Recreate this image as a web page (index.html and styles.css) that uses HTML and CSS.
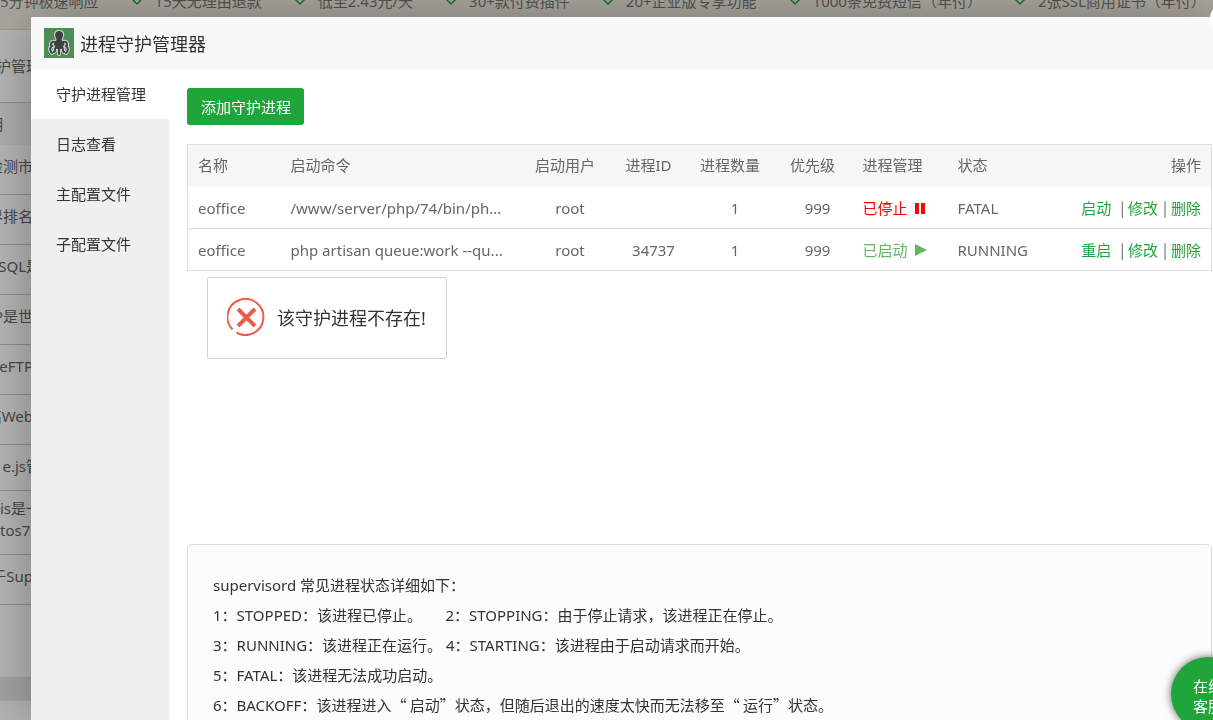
FILE: index.html
```html
<!DOCTYPE html>
<html lang="zh-CN">

<head>
    <meta charset="UTF-8">
    <meta name="viewport" content="width=device-width, initial-scale=1.0">
    <title>进程守护管理器</title>
    <link rel="stylesheet" href="styles.css">
</head>

<body>
    <div class="page">
        <div class="promo">
            <span>5分钟极速响应</span>
            <span><svg viewBox="0 0 12 10"><path d="M1 3l5 5 5-5" /></svg>15天无理由退款</span>
            <span><svg viewBox="0 0 12 10"><path d="M1 3l5 5 5-5" /></svg>低至2.43元/天</span>
            <span><svg viewBox="0 0 12 10"><path d="M1 3l5 5 5-5" /></svg>30+款付费插件</span>
            <span><svg viewBox="0 0 12 10"><path d="M1 3l5 5 5-5" /></svg>20+企业版专享功能</span>
            <span><svg viewBox="0 0 12 10"><path d="M1 3l5 5 5-5" /></svg>1000条免费短信（年付）</span>
            <span><svg viewBox="0 0 12 10"><path d="M1 3l5 5 5-5" /></svg>2张SSL商用证书（年付）</span>
        </div>
        <div class="soft_list">
            <div class="soft_top wide">护管理</div>
            <div class="soft_head">明</div>
            <div class="soft">检测市</div>
            <div class="soft">界排名</div>
            <div class="soft wide">SQL是</div>
            <div class="soft">P是世</div>
            <div class="soft">eFTP</div>
            <div class="soft">高Web</div>
            <div class="soft wide short">e.js管</div>
            <div class="soft start">is是一<br>tos7</div>
            <div class="soft">于Sup</div>
        </div>
        <div class="soft_footer"></div>
    </div>
    <div class="shade"></div>

    <div class="dialog" role="dialog" aria-labelledby="dialog_title">
        <div class="dialog_title">
            <svg class="logo" viewBox="0 0 30 30">
                <rect width="30" height="30" fill="#4d8e57" />
                <g fill="#d0d4d0" stroke="#d0d4d0" stroke-width="4" stroke-linejoin="round" stroke-linecap="round">
                    <path d="M15 3c-2.500 0-4 1.700-4 4 0 2 1.600 3 1.600 5l-3 4 3 5h5l3-5-3-4c0-2 1.600-3 1.600-5 0-2.300-1.600-4-4.200-4z" stroke-width="2" />
                    <path d="M11 14c-4-1-5 2-3 4-3 2-2 5 0 7M19 14c4-1 5 2 3 4 3 2 2 5 0 7M12 19c-2 2 0 4-2 5M18 19c2 2 0 4 2 5M15 19v7" fill="none" />
                </g>
                <g fill="#3d4041" stroke="#3d4041" stroke-width="2" stroke-linecap="round">
                    <path d="M15 3c-2.500 0-4 1.700-4 4 0 2 1.600 3 1.600 5l-3 4 3 5h5l3-5-3-4c0-2 1.600-3 1.600-5 0-2.300-1.600-4-4.200-4z" stroke="none" />
                    <path d="M11 14c-4-1-5 2-3 4-3 2-2 5 0 7M19 14c4-1 5 2 3 4 3 2 2 5 0 7M12 19c-2 2 0 4-2 5M18 19c2 2 0 4 2 5M15 19v7" fill="none" />
                </g>
            </svg>
            <span id="dialog_title">进程守护管理器</span>
        </div>
        <div class="dialog_body">
            <nav class="menu">
                <a class="on" href="#list">守护进程管理</a>
                <a href="#log">日志查看</a>
                <a href="#config">主配置文件</a>
                <a href="#child">子配置文件</a>
            </nav>
            <div class="main">
                <button class="add">添加守护进程</button>
                <div class="table_box">
                    <table>
                        <colgroup>
                            <col class="col_name">
                            <col class="col_cmd">
                            <col class="col_user">
                            <col class="col_pid">
                            <col class="col_num">
                            <col class="col_level">
                            <col class="col_manage">
                            <col class="col_state">
                            <col>
                        </colgroup>
                        <thead>
                            <tr>
                                <th>名称</th>
                                <th>启动命令</th>
                                <th class="center">启动用户</th>
                                <th class="center">进程ID</th>
                                <th class="center">进程数量</th>
                                <th class="center">优先级</th>
                                <th>进程管理</th>
                                <th>状态</th>
                                <th class="right">操作</th>
                            </tr>
                        </thead>
                        <tbody>
                            <tr>
                                <td>eoffice</td>
                                <td>/www/server/php/74/bin/ph...</td>
                                <td class="center">root</td>
                                <td class="center"></td>
                                <td class="center">1</td>
                                <td class="center">999</td>
                                <td><a class="manage stopped" href="#start">已停止<svg viewBox="0 0 14 14"><path d="M2 2h4v11H2zM8 2h4v11H8z" /></svg></a></td>
                                <td>FATAL</td>
                                <td class="right"><a href="#start">启动</a> &nbsp;<i>|</i> <a href="#edit">修改</a> <i>|</i> <a href="#del">删除</a></td>
                            </tr>
                            <tr>
                                <td>eoffice</td>
                                <td>php artisan queue:work --qu...</td>
                                <td class="center">root</td>
                                <td class="center">34737</td>
                                <td class="center">1</td>
                                <td class="center">999</td>
                                <td><a class="manage started" href="#stop">已启动<svg viewBox="0 0 14 14"><path d="M2 1l12 6-12 6z" /></svg></a></td>
                                <td>RUNNING</td>
                                <td class="right"><a href="#restart">重启</a> &nbsp;<i>|</i> <a href="#edit">修改</a> <i>|</i> <a href="#del">删除</a></td>
                            </tr>
                        </tbody>
                    </table>
                    <div class="message" role="alert">
                        <svg viewBox="0 0 38 38">
                            <path d="M5.500 31.500A18 18 0 1 1 9.500 34.600" />
                            <path class="cross" d="M11 11l17 17M28 11L11 28" />
                        </svg>
                        该守护进程不存在!
                    </div>
                </div>
                <ul class="help">
                    <li>supervisord 常见进程状态详细如下：</li>
                    <li>1：STOPPED：该进程已停止。 &nbsp; &nbsp; &nbsp;2：STOPPING：由于停止请求，该进程正在停止。</li>
                    <li>3：RUNNING：该进程正在运行。 4：STARTING：该进程由于启动请求而开始。</li>
                    <li>5：FATAL：该进程无法成功启动。</li>
                    <li>6：BACKOFF：<span class="cjk">该进程进入“ 启动”状态，但随后退出的速度太快而无法移至“ 运行”状态。</span></li>
                </ul>
            </div>
        </div>
    </div>
    <button class="close" aria-label="关闭"></button>
    <button class="service">在线<br>客服</button>
</body>

</html>
```
FILE: styles.css
```css
html,
body {
    margin: 0;
    padding: 0;
    height: 100%;
    overflow: hidden;
}

:root {
    --theme-color: #20a53a;
}

body,
button {
    font-family: "Noto Sans", "Noto Sans CJK SC", sans-serif;
    font-size: 15px;
}

* {
    box-sizing: border-box;
}

a {
    color: var(--theme-color);
    text-decoration: none;
}

button {
    border: none;
    color: white;
    background: var(--theme-color);
    cursor: pointer;
}

/* page behind the dialog */
.page {
    height: 100%;
    color: #666;
    background: white;
    display: flex;
    flex-direction: column;
}

.promo {
    display: flex;
    gap: 32px;
    height: 39px;
    margin-top: -9px;
    line-height: 20px;
    white-space: nowrap;
    color: #777;
    background: #f2ede0;
    border-bottom: 1px solid #e6dcc0;
}

.promo span {
    display: flex;
    align-items: center;
    gap: 12px;
    height: 20px;
}

.promo svg {
    width: 12px;
    height: 10px;
    fill: none;
    stroke: var(--theme-color);
    stroke-width: 1.5;
}

.soft_list {
    flex: 1;
}

.soft_list div {
    display: flex;
    align-items: center;
    justify-content: flex-end;
    width: 33px;
    height: 50px;
    line-height: 22px;
    white-space: nowrap;
    border-bottom: 1px solid #ccc;
}

.soft_list .soft {
    padding-bottom: 8px;
}

.soft_list .wide {
    width: 41px;
}

.soft_list .short {
    height: 46px;
    padding-bottom: 4px;
}

.soft_list .soft_top {
    height: 73px;
}

.soft_list .soft_head {
    width: 31px;
    height: 42px;
    padding-right: 28px;
    background: #f6f6f6;
    border: none;
}

.soft_list .start {
    height: 64px;
    justify-content: flex-start;
}

.soft_footer {
    height: 24px;
    margin-bottom: 19px;
    background: #e6e6e6;
}

.shade {
    position: fixed;
    inset: 0;
    background: rgba(0, 0, 0, 0.3);
}

/* dialog */
.dialog {
    position: fixed;
    top: 17px;
    left: 31px;
    right: 0;
    bottom: 0;
    display: flex;
    flex-direction: column;
    overflow: hidden;
    color: #333;
    background: white;
    border-radius: 2px 0 0 0;
    box-shadow: 1px 1px 50px rgba(0, 0, 0, 0.3);
}

.dialog_title {
    display: flex;
    align-items: center;
    gap: 6px;
    height: 52px;
    padding: 0 13px;
    font-size: 18px;
    background: #f8f8f8;
    border-bottom: 1px solid #eee;
}

.logo {
    width: 30px;
    height: 30px;
}

.dialog_body {
    display: flex;
    flex: 1;
    min-height: 0;
}

.menu {
    width: 138px;
    background: #efefef;
}

.menu a {
    display: block;
    line-height: 50px;
    padding-left: 25px;
    color: #333;
}

.menu .on {
    background: white;
}

.main {
    flex: 1;
    padding: 19px 1px 0 18px;
}

.add {
    display: block;
    height: 37px;
    padding: 0 13px 1px 14px;
    margin-bottom: 19px;
    border-radius: 3px;
}

.table_box {
    position: relative;
    height: 400px;
}

table {
    width: 100%;
    table-layout: fixed;
    border-collapse: collapse;
    border: 1px solid #ddd;
    color: #666;
    line-height: 22px;
}

th,
td {
    padding: 10px 10px 9px;
    text-align: left;
    font-weight: normal;
    white-space: nowrap;
}

th {
    padding: 9px 10px 11px;
    background: #f6f6f6;
}

td {
    border-bottom: 1px solid #ddd;
}

.center {
    text-align: center;
}

td.center {
    padding-left: 20px;
}

.right {
    text-align: right;
}

.cjk,
td i {
    font-family: "Noto Sans CJK SC", sans-serif;
    font-style: normal;
}

td i {
    margin-left: 1px;
}

.col_name {
    width: 93px;
}

.col_cmd {
    width: 240px;
}

.col_user {
    width: 89px;
}

.col_pid {
    width: 78px;
}

.col_num {
    width: 85px;
}

.col_level {
    width: 80px;
}

.col_manage,
.col_state {
    width: 95px;
}

.manage {
    display: flex;
    align-items: center;
    gap: 5px;
    fill: currentColor;
}

.manage svg {
    width: 14px;
    height: 14px;
}

.stopped {
    color: red;
}

.started {
    color: #5cb85c;
}

.message {
    position: absolute;
    top: 133px;
    left: 20px;
    display: flex;
    align-items: center;
    gap: 12px;
    height: 82px;
    padding: 0 20px 2px 19px;
    font-size: 18px;
    background: white;
    border: 1px solid #d3d4d3;
    border-radius: 2px;
}

.message svg {
    width: 38px;
    height: 38px;
    fill: none;
    stroke: #ee5a4a;
    stroke-width: 2;
}

.message .cross {
    stroke-width: 4;
}

.help {
    margin: 0;
    padding: 25px;
    list-style: none;
    line-height: 30px;
    background: #fcfcfc;
    border: 1px solid #ddd;
    border-radius: 5px;
}

/* floating buttons */
.close {
    position: fixed;
    top: 1px;
    right: -33px;
    width: 36px;
    height: 36px;
    background: white;
    border-radius: 50%;
}

.service {
    position: fixed;
    right: -32px;
    bottom: -11px;
    width: 74px;
    height: 74px;
    padding: 4px 0 0;
    line-height: 20px;
    border-radius: 50%;
    box-shadow: 0 0 8px rgba(0, 0, 0, 0.6);
}
```
